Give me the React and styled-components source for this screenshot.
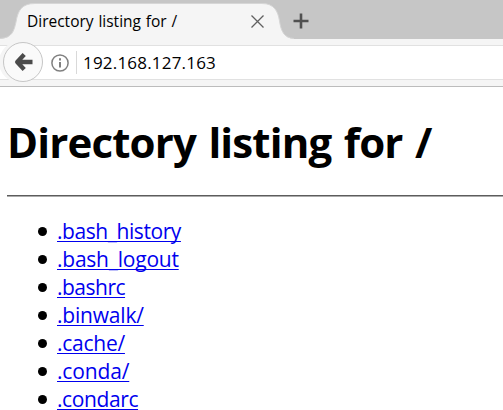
import React from 'react';
import styled, { createGlobalStyle } from 'styled-components';

const GlobalStyle = createGlobalStyle`
  html, body { margin: 0; background: #fff; overflow: hidden; }
  * { box-sizing: border-box; }
`;

const Browser = styled.div`
  height: 410px;
  color: #000;
  font-family: "Open Sans", "Noto Sans", sans-serif;
`;

const TabBar = styled.header`
  display: grid;
  height: 39px;
  background: #c6c6c6;
`;

const TabShape = styled.svg`
  grid-area: 1 / 1;
  display: block;
`;

const TabContent = styled.div`
  grid-area: 1 / 1;
  z-index: 1;
  display: flex;
  align-items: center;
  height: 39px;
  padding: 3px 0 0 27px;
`;

const TabTitle = styled.span`
  width: 223px;
  font-size: 15.5px;
  line-height: 22px;
  letter-spacing: 0;
  word-spacing: 0.8px;
  white-space: nowrap;
`;

const CloseIcon = styled.svg`
  display: block;
  width: 15px;
  height: 15px;
`;

const PlusIcon = styled.svg`
  display: block;
  width: 16px;
  height: 16px;
  margin-left: 28px;
`;

const Toolbar = styled.nav`
  display: grid;
  height: 48px;
  padding-top: 6px;
  background: #f5f5f5;
  border-bottom: 1px solid #bcbcbc;
`;

const AddressField = styled.div`
  grid-area: 1 / 1;
  display: flex;
  align-items: center;
  height: 35px;
  padding-left: 51px;
  background: #fff;
  border-top: 1px solid #e1e1e1;
  border-bottom: 1px solid #e1e1e1;
`;

const BackButton = styled.button`
  grid-area: 1 / 1;
  z-index: 1;
  display: flex;
  align-items: center;
  justify-content: center;
  width: 40px;
  height: 40px;
  margin: -3px 0 0 3px;
  padding: 0 0 0 1px;
  border: 1px solid #c6c6c6;
  border-radius: 50%;
  background: #fafafa;
  box-shadow: -3px 0 0 1px #f5f5f5;
`;

const Divider = styled.div`
  width: 1px;
  height: 23px;
  margin: 0 6px 0 7px;
  background: #d9d9d9;
`;

const Address = styled.span`
  font-size: 17px;
  line-height: 24px;
  letter-spacing: 0.2px;
`;

const Page = styled.main`
  padding: 27px 0 0 7px;
`;

const Heading = styled.h1`
  margin: 0;
  font-size: 42px;
  line-height: 56px;
  font-weight: 700;
  letter-spacing: -0.85px;
  word-spacing: 2.4px;
  white-space: nowrap;
`;

const Rule = styled.hr`
  height: 2px;
  margin: 25px 0 20px;
  border: 0;
  border-top: 1px solid #5c5c5c;
  background: #ababab;
`;

const FileList = styled.ul`
  margin: 0;
  padding: 0 0 0 31px;
  list-style: none;
`;

const FileItem = styled.li`
  display: flex;
  align-items: center;
  gap: 10px;
  height: 28px;

  &::before {
    content: "";
    width: 9px;
    height: 9px;
    border-radius: 50%;
    background: #000;
  }
`;

const FileLink = styled.a`
  color: #0000ee;
  font-size: 21px;
  line-height: 22px;
  letter-spacing: ${({ $tracking }) => $tracking};
  text-decoration: underline;
  text-decoration-thickness: 1px;
  text-underline-offset: 2px;
  text-decoration-skip-ink: none;
`;

const files = [
  { name: '.bash_history', tracking: '-0.43px' },
  { name: '.bash_logout', tracking: '-0.23px' },
  { name: '.bashrc', tracking: '-0.5px' },
  { name: '.binwalk/', tracking: '-0.2px' },
  { name: '.cache/', tracking: '-0.25px' },
  { name: '.conda/', tracking: '-0.15px' },
  { name: '.condarc', tracking: '-0.4px' },
];

export default function App() {
  return (
    <Browser>
      <GlobalStyle />
      <TabBar>
        <TabShape width="503" height="39" viewBox="0 0 503 39">
          <path d="M0 39C12 38 14 31 16 22C18 10 22 3.5 35 3.5H262C274 3.5 278 11 279.5 21C281 31 284 38 294 39Z" fill="#f5f5f5" />
          <path d="M0 38.5C12 38 14 31 16 22C18 10 22 3.5 35 3.5H262C274 3.5 278 11 279.5 21C281 31 284 38 294 38.5" fill="none" stroke="#d6d6d6" />
        </TabShape>
        <TabContent>
          <TabTitle>Directory listing for /</TabTitle>
          <CloseIcon viewBox="0 0 15 15">
            <path d="M1.5 1.5L13.5 13.5M13.5 1.5L1.5 13.5" stroke="#606060" strokeWidth="1.3" />
          </CloseIcon>
          <PlusIcon viewBox="0 0 16 16">
            <path d="M8 .5V15.5M.5 8H15.5" stroke="#505050" strokeWidth="2.6" />
          </PlusIcon>
        </TabContent>
      </TabBar>
      <Toolbar>
        <AddressField>
          <svg width="18" height="18" viewBox="0 0 18 18">
            <circle cx="9" cy="9" r="8.1" fill="none" stroke="#808080" strokeWidth="1.5" />
            <path d="M9 8V13.5M9 4.3V6.4" stroke="#808080" strokeWidth="2" />
          </svg>
          <Divider />
          <Address>192.168.127.163</Address>
        </AddressField>
        <BackButton aria-label="Back">
          <svg width="20" height="20" viewBox="0 0 20 20">
            <path d="M10.2 2.6L3.2 10L10.2 17.4M3.5 10H18.5" fill="none" stroke="#4b4b4b" strokeWidth="4.4" strokeLinejoin="round" />
          </svg>
        </BackButton>
      </Toolbar>
      <Page>
        <Heading>Directory listing for /</Heading>
        <Rule />
        <FileList>
          {files.map(({ name, tracking }) => (
            <FileItem key={name}>
              <FileLink href="#" $tracking={tracking}>{name}</FileLink>
            </FileItem>
          ))}
        </FileList>
      </Page>
    </Browser>
  );
}
